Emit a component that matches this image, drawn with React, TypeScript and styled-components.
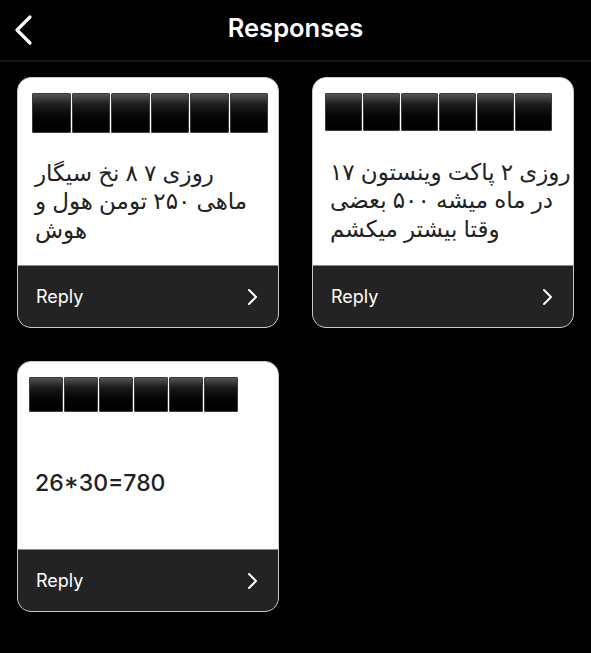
import styled, { createGlobalStyle } from 'styled-components';

const GlobalStyle = createGlobalStyle`
    html, body {
        margin: 0;
        padding: 0;
        background: #000;
    }
    body {
        font-family: 'Inter', 'DejaVu Sans', sans-serif;
        -webkit-font-smoothing: antialiased;
    }
`;

const Page = styled.div`
    width: 591px;
    min-height: 653px;
    background: #000;
`;

const TopBar = styled.header`
    height: 60px;
    display: grid;
    grid-template-columns: 60px 1fr 60px;
    align-items: center;
    border-bottom: 2px solid #161616;
`;

const BackButton = styled.button`
    background: none;
    border: 0;
    padding: 0 0 0 12px;
    height: 100%;
    display: flex;
    align-items: center;
    justify-content: flex-start;
    cursor: pointer;
`;

const Title = styled.h1`
    margin: 0;
    text-align: center;
    color: #fff;
    font-size: 25.5px;
    font-weight: 600;
    letter-spacing: 0;
    padding-bottom: 6px;
`;

const Grid = styled.main`
    display: grid;
    grid-template-columns: 262px 262px;
    column-gap: 33px;
    row-gap: 33px;
    padding: 15px 17px;
`;

const Card = styled.article`
    height: 251px;
    border-radius: 14px;
    border: 1px solid #c9c9c9;
    background: #fff;
    overflow: hidden;
    display: flex;
    flex-direction: column;
    box-sizing: border-box;
`;

const CardBody = styled.div`
    flex: 1;
    display: flex;
    flex-direction: column;
    padding: 15px 6px 0 17px;
`;

const Redact = styled.div<{ $box: number; $offset: number }>`
    display: flex;
    gap: 1px;
    margin-left: ${p => p.$offset}px;
    height: ${p => p.$box}px;
`;

const RedactBox = styled.span<{ $box: number }>`
    width: ${p => p.$box}px;
    height: 100%;
    border-radius: 2px;
    background: linear-gradient(180deg, #5a5a5a 0%, #1c1c1c 30%, #050505 60%, #000 100%);
    box-shadow: inset 0 0 0 1px #3a3a3a;
`;

const Message = styled.div`
    flex: 1;
    display: flex;
    align-items: center;
    color: #222;
    font-size: 23px;
    font-weight: 500;
    line-height: 28.5px;
    white-space: pre;
    padding-top: 5px;
`;

const Footer = styled.button`
    height: 62px;
    flex-shrink: 0;
    border: 0;
    border-top: 1px solid #8a8a8a;
    background: #232323;
    color: #fff;
    display: flex;
    align-items: center;
    justify-content: space-between;
    padding: 0 20px 0 18px;
    font-family: 'Inter', sans-serif;
    font-size: 18px;
    font-weight: 400;
    cursor: pointer;
`;

type Response = {
    text: string;
    box: number;
    offset: number;
};

const responses: Response[] = [
    { text: 'روزی ۷ ۸ نخ سیگار\nماهی ۲۵۰ تومن هول و\nهوش', box: 38.5, offset: -3 },
    { text: 'روزی ۲ پاکت وینستون ۱۷\nدر ماه میشه ۵۰۰ بعضی\nوقتا بیشتر میکشم', box: 37, offset: -5 },
    { text: '26*30=780', box: 34, offset: -6 },
];

const ChevronLeft = () => (
    <svg width='22' height='32' viewBox='0 0 22 32' fill='none'>
        <path d='M18 3 L5 16 L18 29' stroke='#fff' strokeWidth='3.2' strokeLinecap='round' strokeLinejoin='round' />
    </svg>
);

const ChevronRight = () => (
    <svg width='12' height='18' viewBox='0 0 12 18' fill='none'>
        <path d='M3 2 L10 9 L3 16' stroke='#fff' strokeWidth='2' strokeLinecap='round' strokeLinejoin='round' />
    </svg>
);

export default function App() {
    return (
        <Page>
            <GlobalStyle />
            <TopBar>
                <BackButton aria-label='Back'>
                    <ChevronLeft />
                </BackButton>
                <Title>Responses</Title>
                <span />
            </TopBar>
            <Grid>
                {responses.map((r, i) => (
                    <Card key={i}>
                        <CardBody>
                            <Redact $box={r.box + 1} $offset={r.offset}>
                                {Array.from({ length: 6 }).map((_, j) => (
                                    <RedactBox key={j} $box={r.box} />
                                ))}
                            </Redact>
                            <Message>{r.text}</Message>
                        </CardBody>
                        <Footer>
                            Reply
                            <ChevronRight />
                        </Footer>
                    </Card>
                ))}
            </Grid>
        </Page>
    );
}
